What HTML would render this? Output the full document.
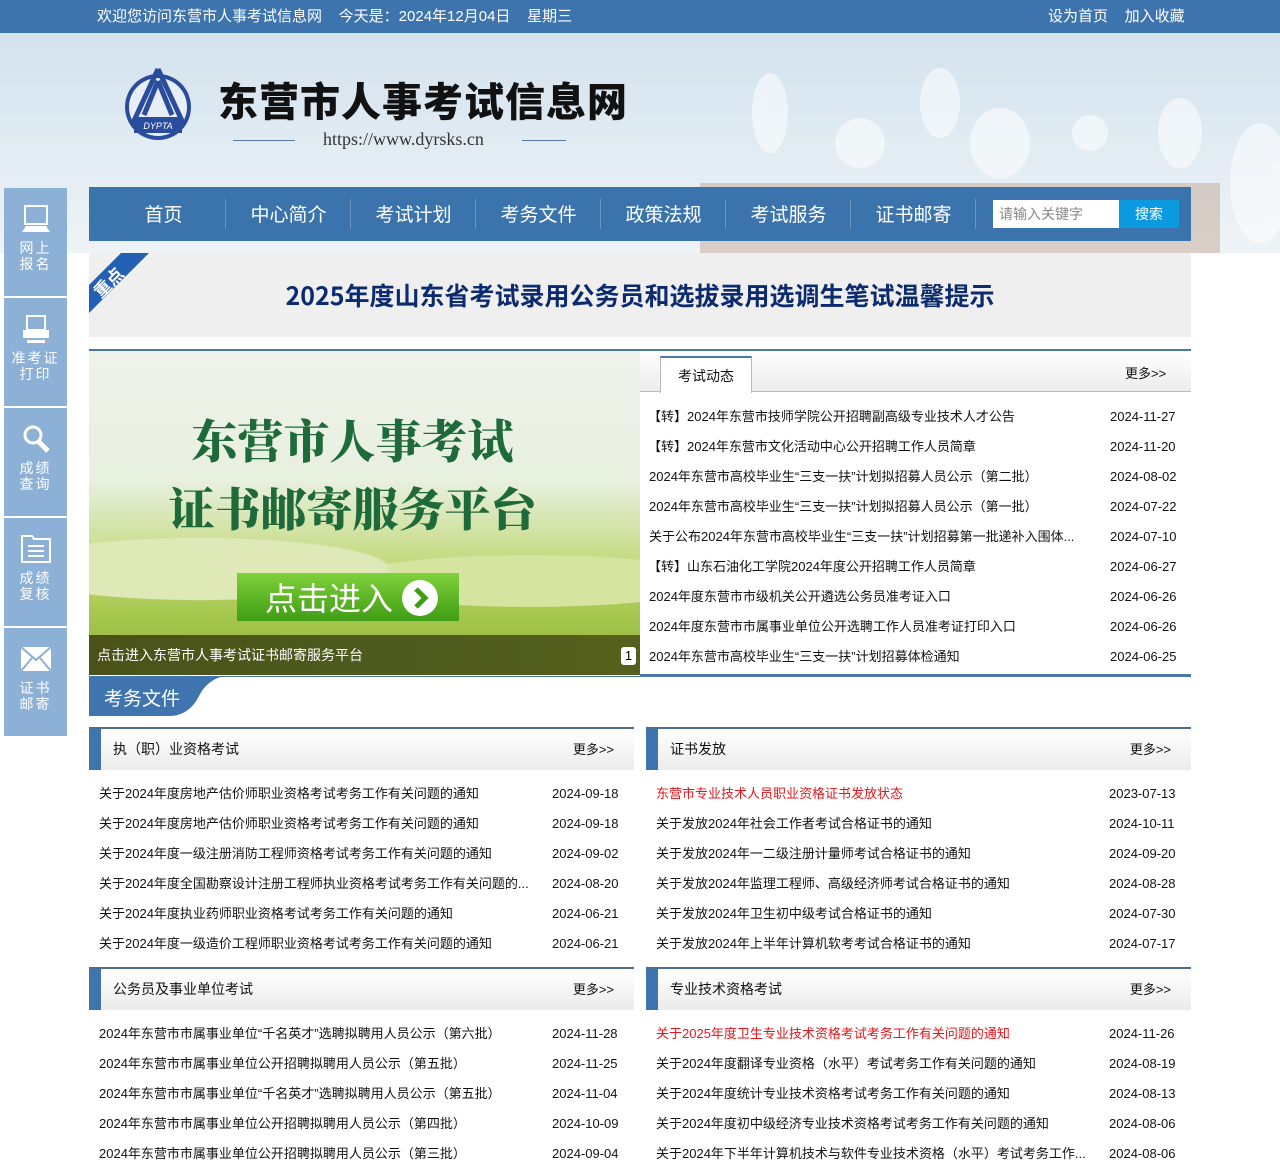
<!DOCTYPE html>
<html><head><meta charset="utf-8">
<style>
*{margin:0;padding:0;box-sizing:border-box}
body{width:1280px;height:1167px;position:relative;font-family:"Liberation Sans","Noto Sans CJK SC",sans-serif;background:#fff;overflow:hidden;color:#111}
.abs{position:absolute}
.top{left:0;top:0;width:1280px;height:33px;background:#3d74ae;color:#fff;font-size:15px;line-height:33px}
.hdr{left:0;top:33px;width:1280px;height:220px;background:linear-gradient(180deg,#d3e2ee 0%,#e2ecf3 55%,#eef3f6 100%)}
.side{left:4px;width:63px;height:108px;background:#8cb0d6;color:#fff;text-align:center;font-size:14px;line-height:16px;letter-spacing:2px}
.side svg{display:block;margin:16px auto 6px}
.nav{left:89px;top:187px;width:1102px;height:54px;background:#3b74ad}
.nav span{position:absolute;top:2px;line-height:54px;color:#fff;font-size:19px;width:125px;text-align:center}
.nav i{position:absolute;top:12px;width:1px;height:30px;background:#6b95c2}
.list div{position:absolute;font-size:13px;height:30px;line-height:30px;white-space:nowrap}
.ph{height:43px;border-top:2px solid #4a6e92;background:linear-gradient(180deg,#fff,#ebebeb);}
.ph b{position:absolute;left:0;top:0;width:12px;height:41px;background:#3f74ae}
.ph span{position:absolute;left:24px;line-height:41px;font-size:14px;font-weight:normal}
.ph em{position:absolute;right:20px;line-height:41px;font-size:13px;font-style:normal}
.red{color:#e3161a}
</style></head><body>
<div class="abs top"><span style="position:absolute;left:97px">欢迎您访问东营市人事考试信息网&nbsp;&nbsp;&nbsp; 今天是：2024年12月04日&nbsp;&nbsp;&nbsp; 星期三</span><span style="position:absolute;left:1048px">设为首页&nbsp;&nbsp;&nbsp; 加入收藏</span></div>
<div class="abs hdr">
<svg class="abs" style="left:640px;top:0" width="640" height="220"><g fill="#fff" opacity=".55"><ellipse cx="130" cy="80" rx="18" ry="40"/><ellipse cx="220" cy="110" rx="25" ry="25"/><ellipse cx="300" cy="70" rx="20" ry="35"/><ellipse cx="360" cy="110" rx="30" ry="35"/><ellipse cx="450" cy="100" rx="18" ry="18"/><ellipse cx="540" cy="100" rx="22" ry="35"/><ellipse cx="620" cy="150" rx="30" ry="60"/></g><rect x="60" y="150" width="520" height="70" fill="#b58a70" opacity=".35"/></svg>
</div>
<svg class="abs" style="left:122px;top:67px" width="72" height="78" viewBox="0 0 72 78"><circle cx="36" cy="40" r="33" fill="#2a4c9c"/><circle cx="36" cy="40" r="29" fill="#e8eef7"/><path d="M36 2 L10 58 M36 2 L62 58 M36 14 L22 48 M36 14 L50 48" stroke="#2a4c9c" stroke-width="5" fill="none"/><path d="M12 50h48v16H12z" fill="#2a4c9c"/><text x="36" y="62" text-anchor="middle" font-size="9" fill="#fff" font-style="italic" font-family="Liberation Sans">DYPTA</text></svg>
<div class="abs" style="left:218px;top:70px;font-size:40px;font-weight:900;letter-spacing:1px;color:#111;font-family:'Noto Sans CJK SC',sans-serif">东营市人事考试信息网</div>
<div class="abs" style="left:233px;top:140px;width:62px;height:1px;background:#5677a8"></div>
<div class="abs" style="left:522px;top:140px;width:44px;height:1px;background:#5677a8"></div>
<div class="abs" style="left:323px;top:129px;font-family:'Liberation Serif',serif;font-size:18px;color:#333">https://www.dyrsks.cn</div>

<div class="abs side" style="top:188px"><svg width="30" height="30" viewBox="0 0 30 30"><rect x="4" y="2" width="22" height="18" fill="none" stroke="#fff" stroke-width="2"/><path d="M1 28 L5 22 H25 L29 28Z" fill="#fff"/></svg>网上<br>报名</div>
<div class="abs side" style="top:298px"><svg width="30" height="30" viewBox="0 0 30 30"><rect x="6" y="2" width="18" height="14" fill="none" stroke="#fff" stroke-width="2"/><rect x="2" y="16" width="26" height="8" fill="#fff"/><rect x="6" y="26" width="18" height="3" fill="#fff"/></svg>准考证<br>打印</div>
<div class="abs side" style="top:408px"><svg width="30" height="30" viewBox="0 0 30 30"><circle cx="12" cy="11" r="8" fill="none" stroke="#fff" stroke-width="3"/><path d="M17 17 L27 27" stroke="#fff" stroke-width="5"/></svg>成绩<br>查询</div>
<div class="abs side" style="top:518px"><svg width="32" height="30" viewBox="0 0 32 30"><path d="M2 2h10l2 3h16v23H2z" fill="none" stroke="#fff" stroke-width="2"/><path d="M8 12h16M8 17h16M8 22h16" stroke="#fff" stroke-width="2"/></svg>成绩<br>复核</div>
<div class="abs side" style="top:628px"><svg width="32" height="30" viewBox="0 0 32 30"><rect x="1" y="3" width="30" height="24" fill="#fff"/><path d="M1 3 L16 16 L31 3 M1 27 L12 14 M31 27 L20 14" stroke="#8cb0d6" stroke-width="2" fill="none"/></svg>证书<br>邮寄</div>

<div class="abs nav">
<span style="left:12px">首页</span><i style="left:136px"></i>
<span style="left:137px">中心简介</span><i style="left:261px"></i>
<span style="left:262px">考试计划</span><i style="left:386px"></i>
<span style="left:387px">考务文件</span><i style="left:511px"></i>
<span style="left:512px">政策法规</span><i style="left:636px"></i>
<span style="left:637px">考试服务</span><i style="left:761px"></i>
<span style="left:762px">证书邮寄</span><i style="left:886px"></i>
<div class="abs" style="left:904px;top:13px;width:126px;height:28px;background:#fff;color:#888;font-size:14px;line-height:28px;padding-left:6px">请输入关键字</div>
<div class="abs" style="left:1030px;top:13px;width:60px;height:28px;background:#0a9ae0;color:#fff;font-size:14px;line-height:28px;text-align:center">搜索</div>
</div>

<div class="abs" style="left:89px;top:253px;width:1102px;height:84px;background:#efefef"></div>
<svg class="abs" style="left:89px;top:253px" width="60" height="60"><path d="M0 32 L32 0 H60 L0 60Z" fill="#2360b3"/><text x="0" y="0" transform="translate(12 46) rotate(-45)" font-size="17" font-weight="bold" fill="#fff" font-family="Noto Sans CJK SC">重点</text></svg>
<div class="abs" style="left:89px;top:277px;width:1102px;text-align:center;font-size:25px;font-weight:bold;color:#0c2b6e;font-family:'Noto Sans CJK SC',sans-serif">2025年度山东省考试录用公务员和选拔录用选调生笔试温馨提示</div>

<div class="abs" style="left:89px;top:349px;width:1102px;height:2px;background:#4a79a8"></div>
<div class="abs" style="left:89px;top:351px;width:551px;height:324px;background:linear-gradient(180deg,#eef3ea 0%,#e8f0e0 40%,#c8dd8a 62%,#a8c850 80%,#8fb43a 100%);overflow:hidden">
<div class="abs" style="left:0;top:170px;width:551px;height:120px;background:radial-gradient(ellipse at 20% 40%,#dfe9b8 0,#dfe9b8 30%,transparent 31%),radial-gradient(ellipse at 80% 50%,#d5e5a0 0,#d5e5a0 30%,transparent 31%)"></div>
<div class="abs" style="left:-12px;top:54px;width:551px;text-align:center;font-family:'Noto Serif CJK SC',serif;font-weight:900;font-size:46px;color:#1f6a3a;line-height:68px">东营市人事考试<br>证书邮寄服务平台</div>
<div class="abs" style="left:148px;top:222px;width:222px;height:48px;background:linear-gradient(180deg,#7fd13a,#3f9d14);color:#fff;font-size:32px;line-height:48px;padding-left:28px;font-family:'Noto Sans CJK SC',sans-serif">点击进入</div>
<svg class="abs" style="left:312px;top:228px" width="38" height="38"><circle cx="19" cy="19" r="18" fill="#fff"/><path d="M15 10 L24 19 L15 28" stroke="#3f9d14" stroke-width="5" fill="none"/></svg>
<div class="abs" style="left:0;top:284px;width:551px;height:40px;background:linear-gradient(90deg,#4a5218,#4e5a1e 50%,#55601c);color:#fff;font-size:14px;line-height:40px;padding-left:8px">点击进入东营市人事考试证书邮寄服务平台</div>
<div class="abs" style="left:532px;top:296px;width:15px;height:18px;background:#fff;border-radius:3px;font-size:13px;text-align:center;line-height:18px;color:#000">1</div>
</div>

<div class="abs" style="left:640px;top:351px;width:551px;height:41px;background:linear-gradient(180deg,#fff,#ececec);border-bottom:1px solid #bbb"></div>
<div class="abs" style="left:660px;top:356px;width:92px;height:37px;background:#fff;border:1px solid #bbb;border-top:2px solid #4a79a8;border-bottom:none;text-align:center;line-height:36px;font-size:14px">考试动态</div>
<div class="abs" style="left:1125px;top:363px;font-size:13px">更多&gt;&gt;</div>
<div class="abs list" style="left:0;top:0">
<div style="left:648px;top:402px">【转】2024年东营市技师学院公开招聘副高级专业技术人才公告</div><div style="left:1110px;top:402px">2024-11-27</div>
<div style="left:648px;top:432px">【转】2024年东营市文化活动中心公开招聘工作人员简章</div><div style="left:1110px;top:432px">2024-11-20</div>
<div style="left:649px;top:462px">2024年东营市高校毕业生“三支一扶”计划拟招募人员公示（第二批）</div><div style="left:1110px;top:462px">2024-08-02</div>
<div style="left:649px;top:492px">2024年东营市高校毕业生“三支一扶”计划拟招募人员公示（第一批）</div><div style="left:1110px;top:492px">2024-07-22</div>
<div style="left:649px;top:522px">关于公布2024年东营市高校毕业生“三支一扶”计划招募第一批递补入围体...</div><div style="left:1110px;top:522px">2024-07-10</div>
<div style="left:648px;top:552px">【转】山东石油化工学院2024年度公开招聘工作人员简章</div><div style="left:1110px;top:552px">2024-06-27</div>
<div style="left:649px;top:582px">2024年度东营市市级机关公开遴选公务员准考证入口</div><div style="left:1110px;top:582px">2024-06-26</div>
<div style="left:649px;top:612px">2024年度东营市市属事业单位公开选聘工作人员准考证打印入口</div><div style="left:1110px;top:612px">2024-06-26</div>
<div style="left:649px;top:642px">2024年东营市高校毕业生“三支一扶”计划招募体检通知</div><div style="left:1110px;top:642px">2024-06-25</div>
</div>
<div class="abs" style="left:640px;top:674px;width:551px;height:2px;background:#4a79a8"></div>

<div class="abs" style="left:89px;top:676px;width:1102px;height:1px;background:#4a79a8"></div>
<svg class="abs" style="left:89px;top:676px" width="135" height="40"><path d="M0 0 H135 Q118 4 110 20 Q100 40 80 40 H0Z" fill="#3f74ae"/></svg>
<div class="abs" style="left:104px;top:684px;font-size:19px;color:#fff">考务文件</div>

<div class="abs ph" style="left:89px;top:727px;width:545px"><b></b><span>执（职）业资格考试</span><em>更多&gt;&gt;</em></div>
<div class="abs ph" style="left:646px;top:727px;width:545px"><b></b><span>证书发放</span><em>更多&gt;&gt;</em></div>
<div class="abs ph" style="left:89px;top:967px;width:545px"><b></b><span>公务员及事业单位考试</span><em>更多&gt;&gt;</em></div>
<div class="abs ph" style="left:646px;top:967px;width:545px"><b></b><span>专业技术资格考试</span><em>更多&gt;&gt;</em></div>

<div class="abs list" style="left:0;top:0">
<div style="left:99px;top:779px">关于2024年度房地产估价师职业资格考试考务工作有关问题的通知</div><div style="left:552px;top:779px">2024-09-18</div>
<div style="left:99px;top:809px">关于2024年度房地产估价师职业资格考试考务工作有关问题的通知</div><div style="left:552px;top:809px">2024-09-18</div>
<div style="left:99px;top:839px">关于2024年度一级注册消防工程师资格考试考务工作有关问题的通知</div><div style="left:552px;top:839px">2024-09-02</div>
<div style="left:99px;top:869px">关于2024年度全国勘察设计注册工程师执业资格考试考务工作有关问题的...</div><div style="left:552px;top:869px">2024-08-20</div>
<div style="left:99px;top:899px">关于2024年度执业药师职业资格考试考务工作有关问题的通知</div><div style="left:552px;top:899px">2024-06-21</div>
<div style="left:99px;top:929px">关于2024年度一级造价工程师职业资格考试考务工作有关问题的通知</div><div style="left:552px;top:929px">2024-06-21</div>

<div class="red" style="left:656px;top:779px">东营市专业技术人员职业资格证书发放状态</div><div style="left:1109px;top:779px">2023-07-13</div>
<div style="left:656px;top:809px">关于发放2024年社会工作者考试合格证书的通知</div><div style="left:1109px;top:809px">2024-10-11</div>
<div style="left:656px;top:839px">关于发放2024年一二级注册计量师考试合格证书的通知</div><div style="left:1109px;top:839px">2024-09-20</div>
<div style="left:656px;top:869px">关于发放2024年监理工程师、高级经济师考试合格证书的通知</div><div style="left:1109px;top:869px">2024-08-28</div>
<div style="left:656px;top:899px">关于发放2024年卫生初中级考试合格证书的通知</div><div style="left:1109px;top:899px">2024-07-30</div>
<div style="left:656px;top:929px">关于发放2024年上半年计算机软考考试合格证书的通知</div><div style="left:1109px;top:929px">2024-07-17</div>

<div style="left:99px;top:1019px">2024年东营市市属事业单位“千名英才”选聘拟聘用人员公示（第六批）</div><div style="left:552px;top:1019px">2024-11-28</div>
<div style="left:99px;top:1049px">2024年东营市市属事业单位公开招聘拟聘用人员公示（第五批）</div><div style="left:552px;top:1049px">2024-11-25</div>
<div style="left:99px;top:1079px">2024年东营市市属事业单位“千名英才”选聘拟聘用人员公示（第五批）</div><div style="left:552px;top:1079px">2024-11-04</div>
<div style="left:99px;top:1109px">2024年东营市市属事业单位公开招聘拟聘用人员公示（第四批）</div><div style="left:552px;top:1109px">2024-10-09</div>
<div style="left:99px;top:1139px">2024年东营市市属事业单位公开招聘拟聘用人员公示（第三批）</div><div style="left:552px;top:1139px">2024-09-04</div>

<div class="red" style="left:656px;top:1019px">关于2025年度卫生专业技术资格考试考务工作有关问题的通知</div><div style="left:1109px;top:1019px">2024-11-26</div>
<div style="left:656px;top:1049px">关于2024年度翻译专业资格（水平）考试考务工作有关问题的通知</div><div style="left:1109px;top:1049px">2024-08-19</div>
<div style="left:656px;top:1079px">关于2024年度统计专业技术资格考试考务工作有关问题的通知</div><div style="left:1109px;top:1079px">2024-08-13</div>
<div style="left:656px;top:1109px">关于2024年度初中级经济专业技术资格考试考务工作有关问题的通知</div><div style="left:1109px;top:1109px">2024-08-06</div>
<div style="left:656px;top:1139px">关于2024年下半年计算机技术与软件专业技术资格（水平）考试考务工作...</div><div style="left:1109px;top:1139px">2024-08-06</div>
</div>
</body></html>
